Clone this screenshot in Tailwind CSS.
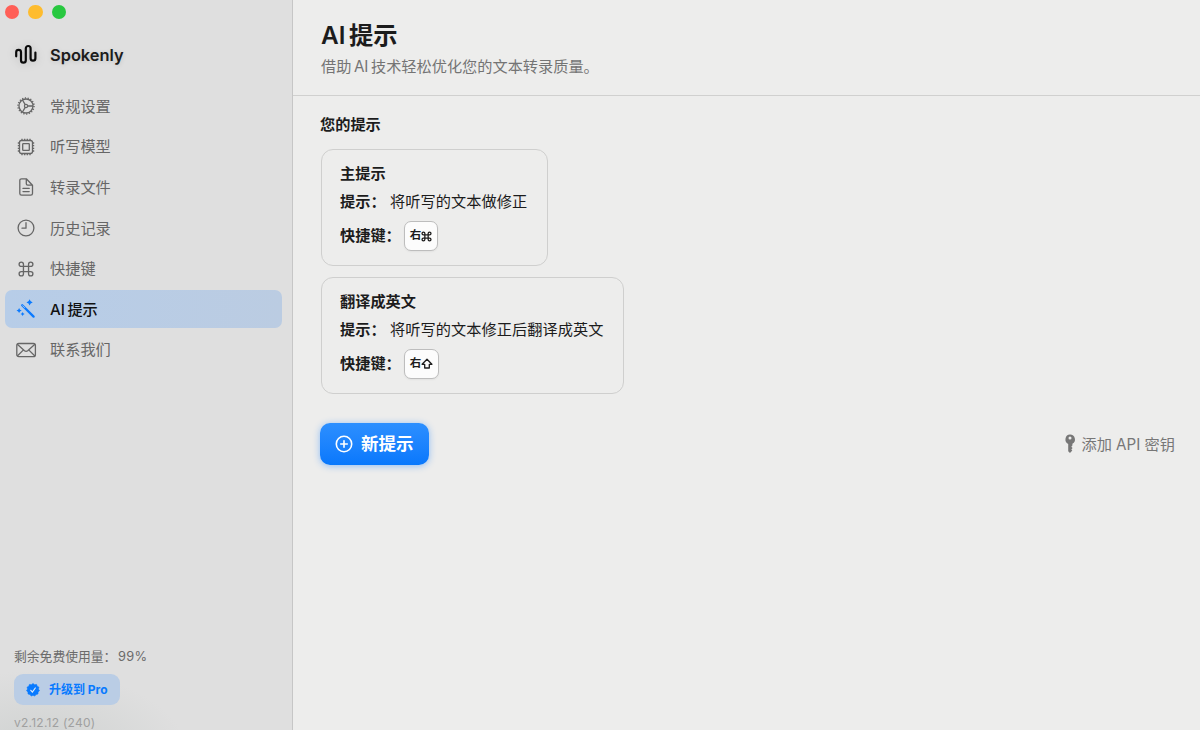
<!DOCTYPE html>
<html lang="zh-CN">
<head>
<meta charset="utf-8">
<title>Spokenly</title>
<script src="https://cdn.jsdelivr.net/npm/@tailwindcss/browser@4"></script>
</head>
<body class="w-[1200px] h-[730px] overflow-hidden flex bg-[#ededec] font-[Inter,'Noto_Sans_CJK_SC',sans-serif] text-[15.2px] text-[#1c1c1c]">
<svg class="hidden">
  <symbol id="cmd" viewBox="0 0 18 18"><path d="M6.300 6.300H11.700V11.700H6.300ZM6.300 6.300V4A2.300 2.300 0 1 0 4 6.300ZM11.700 6.300H14A2.300 2.300 0 1 0 11.700 4ZM11.700 11.700V14A2.300 2.300 0 1 0 14 11.700ZM6.300 11.700H4A2.300 2.300 0 1 0 6.300 14Z" fill="none" stroke="currentColor"/></symbol>
</svg>
<aside class="w-[293px] h-full shrink-0 border-r border-[#c6c6c6] bg-[#dfdfdf] bg-[radial-gradient(ellipse_150px_90px_at_40px_760px,#cdd0cf,#dfdfdf)] flex flex-col">
  <div class="flex gap-[9px] pl-[4.500px] pt-[4.500px] h-6 shrink-0">
    <i class="size-[14.5px] rounded-full bg-[#ff5f57]"></i>
    <i class="size-[14.5px] rounded-full bg-[#febc2e]"></i>
    <i class="size-[14.5px] rounded-full bg-[#28c840]"></i>
  </div>
  <div class="flex items-center h-[62px] shrink-0 pl-[14px]">
    <svg class="w-6 h-[22px] drop-shadow-[0_1px_4px_rgba(0,0,0,.15)]" viewBox="0 0 24 22" fill="none" stroke="#0a0a0a" stroke-width="2.2" stroke-linecap="round"><path d="M2.2 12.3V8.3a2.4 2.4 0 0 1 4.8 0V16.3a2.4 2.4 0 0 0 4.8 0V4.4a2.4 2.4 0 0 1 4.8 0V14.3a2.4 2.4 0 0 0 4.8 0V8.5"/></svg>
    <span class="ml-3 text-[16.4px] font-semibold text-shadow-[0_1px_5px_rgba(0,0,0,.12)]">Spokenly</span>
  </div>
  <nav class="flex flex-col gap-[3.1px] pl-[5px] pr-[10px] pt-[1.5px] text-[#666]">
    <a class="h-[37.5px] flex items-center pl-[11px] gap-[14px]">
      <svg class="size-5" viewBox="0 0 20 20" fill="none" stroke="currentColor"><circle cx="10" cy="10" r="7" stroke-width="1.3"/><circle cx="10" cy="10" r="8" stroke-width="1.5" stroke-dasharray="1.2 1.593"/><circle cx="10" cy="10" r="1.6" stroke-width="1.2"/><path d="M11.6 10H17M9.2 8.6 6.5 4M9.2 11.4 6.5 16" stroke-width="1.3"/></svg><span class="pt-[2px]">常规设置</span></a>
    <a class="h-[37.5px] flex items-center pl-[11px] gap-[14px]">
      <svg class="size-5" viewBox="0 0 20 20" fill="none" stroke="currentColor" stroke-width="1.3"><rect x="3.5" y="3.5" width="13" height="13" rx="2"/><rect x="6.7" y="6.7" width="6.6" height="6.6" rx=".6"/><path d="M6 3.5V1.8M8.7 3.5V1.8M11.3 3.5V1.8M14 3.5V1.8M6 18.2V16.5M8.7 18.2V16.5M11.3 18.2V16.5M14 18.2V16.5M1.8 6H3.5M1.8 8.7H3.5M1.8 11.3H3.5M1.8 14H3.5M16.5 6H18.2M16.5 8.7H18.2M16.5 11.3H18.2M16.5 14H18.2"/></svg><span class="pt-[2px]">听写模型</span></a>
    <a class="h-[37.5px] flex items-center pl-[11px] gap-[14px]">
      <svg class="size-5" viewBox="0 0 20 20" fill="none" stroke="currentColor" stroke-width="1.3" stroke-linecap="round" stroke-linejoin="round"><path d="M10.3 1.8H5.6a1.8 1.8 0 0 0-1.8 1.8V16.4a1.8 1.8 0 0 0 1.8 1.8H14.7a1.8 1.8 0 0 0 1.8-1.8V8.2ZM10.3 1.8V6.8a1.4 1.4 0 0 0 1.4 1.4H16.5M7 11.4H13.2M7 14.6H13.2"/></svg><span class="pt-[2px]">转录文件</span></a>
    <a class="h-[37.5px] flex items-center pl-[11px] gap-[14px]">
      <svg class="size-5" viewBox="0 0 20 20" fill="none" stroke="currentColor" stroke-width="1.3" stroke-linecap="round" stroke-linejoin="round"><circle cx="10" cy="10" r="7.9"/><path d="M10 4.7V10.2H6"/></svg><span class="pt-[2px]">历史记录</span></a>
    <a class="h-[37.5px] flex items-center pl-[11px] gap-[14px]">
      <svg class="size-5 p-[1.5px]" stroke-width="1.4"><use href="#cmd"/></svg><span class="pt-[2px]">快捷键</span></a>
    <a class="h-[37.5px] flex items-center pl-[11px] gap-[14px] rounded-[7px] bg-linear-to-r from-[#b7cde8] to-[#bbcce2] text-[#111] font-medium">
      <svg class="size-5 overflow-visible" viewBox="0 0 20 20" fill="#0a7aff"><path d="M6.2 6.2 17.6 17.6" stroke="#0a7aff" stroke-width="2.300" stroke-linecap="round"/><path d="M6.7 6.7 8.6 8.6" stroke="#b9cde7" stroke-width=".8" stroke-linecap="round"/><path d="M13.600.3Q14.200 2.800 16.700 3.400 14.200 4 13.600 6.500 13 4 10.500 3.400 13 2.800 13.600.3ZM3.100 8.900Q3.600 11 5.700 11.500 3.600 12 3.100 14.100 2.600 12 .5 11.500 2.600 11 3.100 8.900ZM6.600 12.900Q7 14.500 8.600 14.900 7 15.300 6.600 16.900 6.200 15.300 4.600 14.900 6.200 14.500 6.600 12.900Z"/></svg><span class="flex gap-[2.500px] pt-[2px]"><span>AI</span><span>提示</span></span></a>
    <a class="h-[37.5px] flex items-center pl-[11px] gap-[14px]">
      <svg class="size-5 overflow-visible" viewBox="0 0 20 20" fill="none" stroke="currentColor" stroke-width="1.300" stroke-linejoin="round"><rect x=".8" y="3.500" width="18.600" height="13.200" rx="2"/><path d="M1.300 4.300 8.500 10.700Q10.100 12 11.700 10.700L18.900 4.300M1.300 16 7.500 9.900M18.900 16 12.700 9.900"/></svg><span class="pt-[2px]">联系我们</span></a>
  </nav>
  <div class="mt-auto pl-[14px] flex flex-col items-start">
    <div class="h-5 flex items-center text-[12.8px] text-[#6b6b6b] whitespace-nowrap"><span class="w-[104px]">剩余免费使用量：</span><span class="tracking-[.3px]">99%</span></div>
    <div class="mt-[7px] w-[106px] h-[31px] rounded-[9px] bg-[#bacde5] flex items-center pl-3 gap-[9px] text-[#087aff] text-[12px] font-bold">
      <svg class="size-[14px] shrink-0 overflow-visible" viewBox="0 0 14 14"><path d="M7 .5 8.600 1.700 10.600 1.400 11.200 3.300 13 4.200 12.400 6.100 13.500 7.700 12 9 12 11 10 11.400 8.800 13.100 7 12.300 5.200 13.100 4 11.400 2 11 2 9 .5 7.700 1.600 6.100 1 4.200 2.800 3.300 3.400 1.400 5.400 1.700Z" fill="#087aff" stroke="#087aff" stroke-width=".6" stroke-linejoin="round"/><path d="M4.800 7.300 6.400 9 9.300 5" fill="none" stroke="#dce9fa" stroke-width="1.200" stroke-linecap="round"/></svg>
      <span class="whitespace-nowrap">升级到 Pro</span></div>
    <div class="h-[25px] pt-[9px] leading-[18px] text-[12px] tracking-[.25px] text-[#a0a0a0]">v2.12.12 (240)</div>
  </div>
</aside>
<main class="flex-1 h-full flex flex-col">
  <header class="h-24 shrink-0 border-b border-[#d0d0cf] pl-7 pt-[17px]">
    <h1 class="flex gap-[3.500px] text-[24.3px] leading-9 font-semibold"><span>AI</span><span>提示</span></h1>
    <p class="flex gap-[2.500px] mt-[2px] leading-6 text-[#747474]"><span>借助</span><span>AI</span><span>技术轻松优化您的文本转录质量。</span></p>
  </header>
  <section class="pl-[27px] pr-[25px] pt-[17px] flex flex-col items-start">
    <h2 class="leading-6 font-bold">您的提示</h2>
    <article class="mt-3 ml-px w-[227px] h-[117px] rounded-[12px] border border-[#cfcfce] pl-[18px] pt-3">
      <h3 class="leading-6 font-bold">主提示</h3>
      <div class="mt-[4px] leading-6 flex"><b class="w-[50px] shrink-0 whitespace-nowrap">提示：</b><span class="whitespace-nowrap tracking-[.06px]">将听写的文本做修正</span></div>
      <div class="mt-[7px] h-[30px] flex items-center"><b class="w-[64px] pt-px whitespace-nowrap">快捷键：</b><kbd class="w-[34px] h-[30px] rounded-[7px] bg-[#fcfcfc] border border-[#bdbdbd] shadow-xs flex items-center justify-center font-[Inter,'Noto_Sans_CJK_SC',sans-serif] text-[11.500px] font-bold"><span>右</span><svg class="size-[11px]" stroke-width="2.100"><use href="#cmd"/></svg></kbd></div>
    </article>
    <article class="mt-[11px] ml-px w-[303px] h-[117px] rounded-[12px] border border-[#cfcfce] pl-[18px] pt-3">
      <h3 class="leading-6 font-bold">翻译成英文</h3>
      <div class="mt-[4px] leading-6 flex"><b class="w-[50px] shrink-0 whitespace-nowrap">提示：</b><span class="whitespace-nowrap tracking-[.06px]">将听写的文本修正后翻译成英文</span></div>
      <div class="mt-[7px] h-[30px] flex items-center"><b class="w-[64px] pt-px whitespace-nowrap">快捷键：</b><kbd class="w-[35px] h-[30px] rounded-[7px] bg-[#fcfcfc] border border-[#bdbdbd] shadow-xs flex items-center justify-center font-[Inter,'Noto_Sans_CJK_SC',sans-serif] text-[11.500px] font-bold"><span>右</span><svg class="size-[12px]" viewBox="0 0 12 12" fill="none" stroke="currentColor" stroke-width="1.300" stroke-linejoin="round"><path d="M6 1.300 10.900 6.300H8.300V10H3.700V6.300H1.100Z"/></svg></kbd></div>
    </article>
    <div class="mt-[29px] w-full flex items-center justify-between">
      <button class="w-[109px] h-[42px] rounded-[10px] bg-linear-to-b from-[#2c8fff] to-[#0878fc] shadow-[0_1px_7px_rgba(30,130,255,.45)] text-white text-[17.500px] font-semibold flex items-center pl-[14px] gap-[7px]">
        <svg class="size-5" viewBox="0 0 20 20" fill="none" stroke="currentColor" stroke-width="1.600" stroke-linecap="round"><circle cx="10" cy="10" r="7.700"/><path d="M10 6.700V13.300M6.700 10H13.300"/></svg><span>新提示</span></button>
      <div class="flex items-center gap-[5px] text-[#777]"><svg class="w-3 h-5" viewBox="0 0 12 20" fill="currentColor"><path fill-rule="evenodd" d="M6 .6a4.900 4.900 0 0 1 2.400 9.200V11.500L7.300 12.700 8.600 14 7.300 15.400 8.300 16.500 6 19 4.200 17.200V9.900A4.900 4.900 0 0 1 6 .6ZM6 2.400a1.500 1.500 0 1 0 0 3a1.500 1.500 0 0 0 0-3Z"/></svg><span class="whitespace-nowrap pt-[2px]">添加 API 密钥</span></div>
    </div>
  </section>
</main>
</body>
</html>
